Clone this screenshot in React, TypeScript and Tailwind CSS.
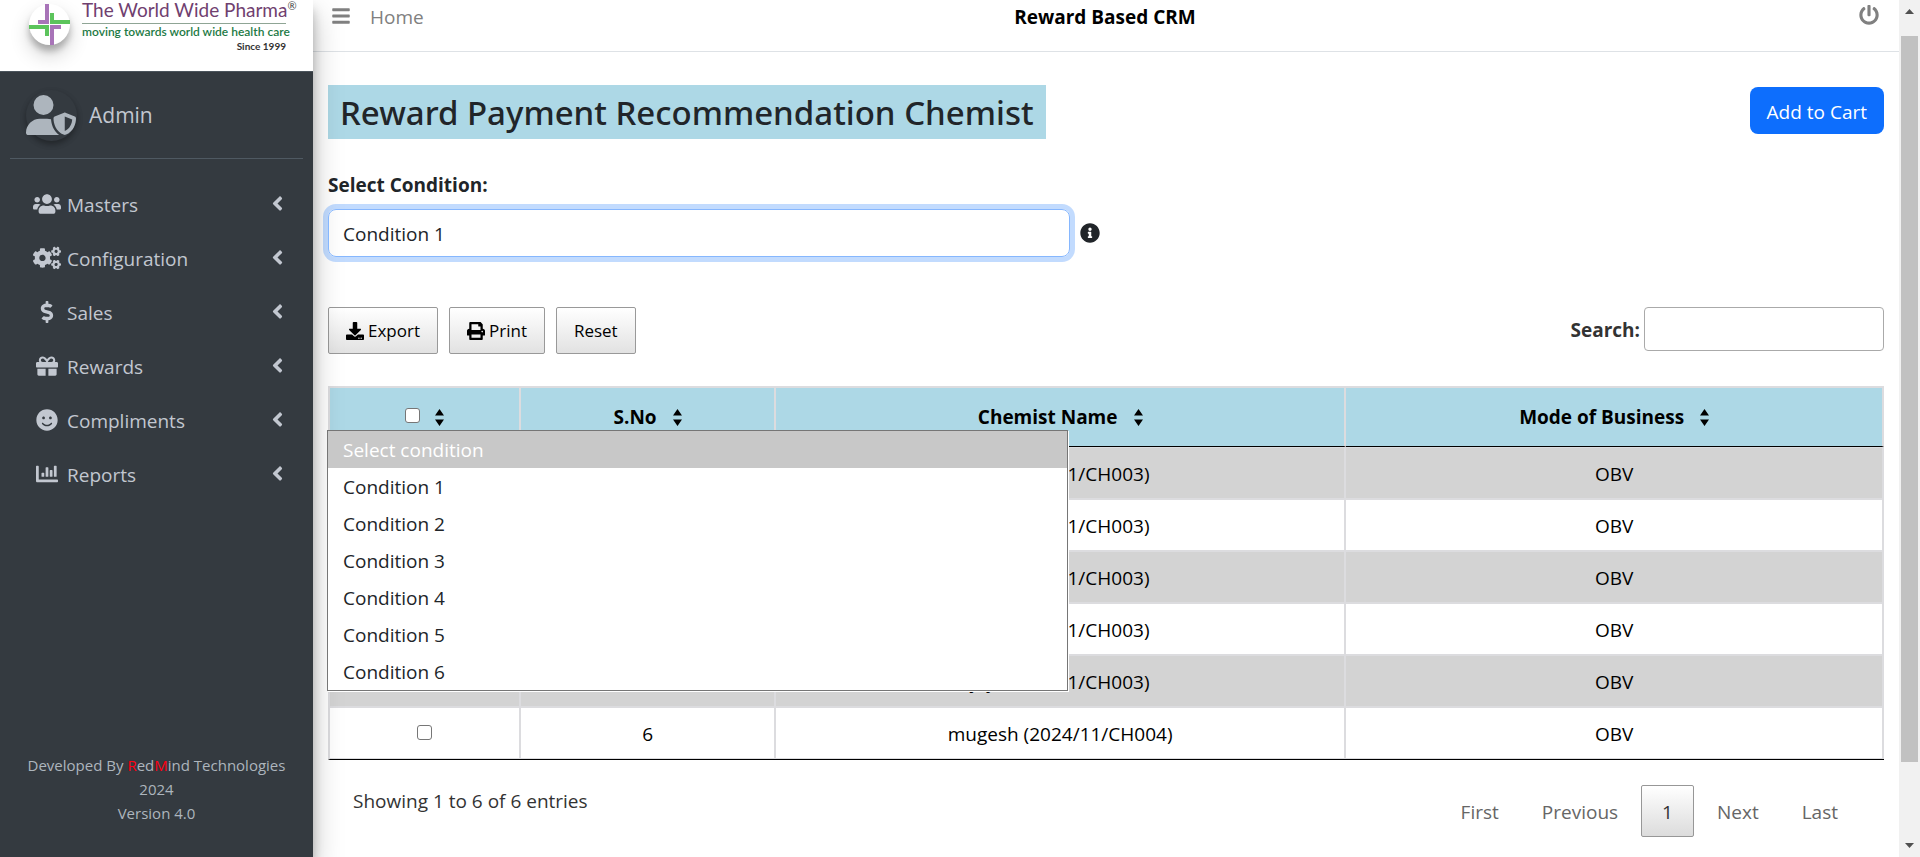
import { useState } from "react";
import { FaUsers, FaCogs, FaDollarSign, FaGift, FaSmile, FaChartBar, FaAngleLeft, FaBars, FaPowerOff, FaInfoCircle, FaDownload, FaPrint } from "react-icons/fa";
import { FaUserShield } from "react-icons/fa6";
import type { IconType } from "react-icons";

const menu: { label: string; icon: IconType; size: number }[] = [
  { label: "Masters", icon: FaUsers, size: 28 },
  { label: "Configuration", icon: FaCogs, size: 28 },
  { label: "Sales", icon: FaDollarSign, size: 22 },
  { label: "Rewards", icon: FaGift, size: 22 },
  { label: "Compliments", icon: FaSmile, size: 22 },
  { label: "Reports", icon: FaChartBar, size: 22 },
];

const conditions = ["Condition 1", "Condition 2", "Condition 3", "Condition 4", "Condition 5", "Condition 6"];

const rows = [
  { id: 1, name: "jay (2024/11/CH003)", mode: "OBV" },
  { id: 2, name: "jay (2024/11/CH003)", mode: "OBV" },
  { id: 3, name: "jay (2024/11/CH003)", mode: "OBV" },
  { id: 4, name: "jay (2024/11/CH003)", mode: "OBV" },
  { id: 5, name: "jay (2024/11/CH003)", mode: "OBV" },
  { id: 6, name: "mugesh (2024/11/CH004)", mode: "OBV" },
];

function LogoMark() {
  return (
    <svg viewBox="0 0 41 41" className="size-[41px]" aria-hidden="true">
      <path fill="#a874b8" d="M16 0h4v20H9v-4h7zM21 21h11v4h-7v16h-4z" />
      <path fill="#5cc45c" d="M21 9h4v7h16v4H21zM0 21h20v11h-4v-7H0z" />
    </svg>
  );
}

function SortIcon() {
  return (
    <svg viewBox="0 0 9 17" className="h-[17px] w-[9px]" aria-hidden="true">
      <path d="M4.500 0L9 6.500H0zM0 10.500H9L4.500 17z" />
    </svg>
  );
}

function Sidebar() {
  return (
    <aside className="relative z-10 flex w-[313px] shrink-0 flex-col bg-[#343a40] text-[#c2c7d0] shadow-[0_14px_28px_rgba(0,0,0,0.25),0_10px_10px_rgba(0,0,0,0.22)]">
      <a href="#home" className="flex h-[72px] items-start gap-3 border-b border-[#4b545c] bg-white pl-[29px]">
        <span className="mt-1 rounded-full bg-white shadow-[0_10px_20px_rgba(0,0,0,0.19),0_6px_6px_rgba(0,0,0,0.23)]">
          <LogoMark />
        </span>
        <span className="flex w-[204px] flex-col font-['Lato',sans-serif]">
          <span className="flex whitespace-nowrap text-[19px] leading-5 text-[#70406f]">
            The World Wide Pharma
            <span className="text-[11px] leading-3 text-[#444]">®</span>
          </span>
          <span className="mt-[3px] border-t border-[#8fa595]" />
          <span className="whitespace-nowrap text-[12px] font-semibold leading-4 text-[#1d7a45]">moving towards world wide health care</span>
          <span className="text-right text-[10px] font-bold leading-3 text-[#333]">Since 1999</span>
        </span>
      </a>
      <div className="mx-[10px] flex h-[87px] items-center gap-3 border-b border-[#4f5962] pl-4">
        <span className="flex size-[51px] items-center rounded-full shadow-[0_3px_6px_rgba(0,0,0,0.16),0_3px_6px_rgba(0,0,0,0.23)]">
          <FaUserShield size={50} color="#adb5bd" />
        </span>
        <a href="#admin" className="text-[21px] leading-[30px]">Admin</a>
      </div>
      <nav className="mt-[18px] flex flex-col">
        {menu.map(({ label, icon: Icon, size }) => (
          <a key={label} href={"#" + label.toLowerCase()} className="flex h-[54px] items-center pl-8 pr-6">
            <span className="flex w-[30px] justify-center">
              <Icon size={size} />
            </span>
            <span className="ml-[5px] flex-1 pt-0.5">{label}</span>
            <FaAngleLeft size={23} className="mb-0.5" />
          </a>
        ))}
      </nav>
      <footer className="mt-auto pb-8 text-center text-[15px] leading-6 text-[#adb5bd]">
        <p>
          Developed By <span className="text-[#ff0014]">R</span>ed<span className="text-[#ff0014]">M</span>ind Technologies
        </p>
        <p>2024</p>
        <p>Version 4.0</p>
      </footer>
    </aside>
  );
}

const checkbox = "size-[15px] appearance-none rounded-[3px] border border-[#767676] bg-white align-middle checked:bg-[#0d6efd]";
const toolButton = "flex h-[47px] items-center gap-1 rounded-[2px] border border-[#999] bg-linear-to-b from-white to-[#e2e2e2] px-[17px] text-[17px] leading-6 text-black";
const pageLink = "h-[52px] px-5 pt-0.5";

function ConditionPicker() {
  const [value, setValue] = useState("Condition 1");
  return (
    <div className="mt-[31px] w-1/2">
      <label htmlFor="condition" className="block font-bold leading-[30px]">Select Condition:</label>
      <div className="relative z-20 mt-[9px] flex items-center gap-[10px] pr-[6px]">
        <select
          id="condition"
          value={value}
          onChange={(e) => setValue(e.target.value)}
          className="h-12 min-w-0 flex-1 appearance-none rounded-lg border border-[#86b7fe] bg-transparent px-[14px] pt-0.5 text-[#212529] shadow-[0_0_0_5px_rgba(13,110,253,0.25)] outline-none"
        >
          {conditions.map((c) => (
            <option key={c}>{c}</option>
          ))}
        </select>
        <FaInfoCircle size={20} />
        <ul className="absolute -left-px right-[38px] top-[221px] border border-[#767676] bg-white leading-[35px] shadow-[1px_1px_0_#fff]">
          <li className="bg-[#c8c8c8] px-[15px] pt-0.5 text-white">Select condition</li>
          {conditions.map((c) => (
            <li key={c} className="px-[15px] pt-0.5" onClick={() => setValue(c)}>{c}</li>
          ))}
        </ul>
      </div>
    </div>
  );
}

function ChemistTable() {
  const th = "h-[61px] border-b border-r-2 border-t-2 border-b-black border-r-[#dcdcdf] border-t-[#dcdcdf] p-0 font-bold";
  return (
    <table className="mt-8 w-full table-fixed border-separate border-spacing-0 border-b border-l-2 border-b-black border-l-[#dcdcdf] text-center text-black">
      <colgroup>
        <col className="w-[12.3%]" />
        <col className="w-[16.4%]" />
        <col className="w-[36.7%]" />
        <col />
      </colgroup>
      <thead className="bg-[#add8e6]">
        <tr>
          <th className={th}>
            <div className="flex items-center justify-center gap-[15px]">
              <input type="checkbox" aria-label="Select all chemists" className={checkbox + " mb-1"} />
              <SortIcon />
            </div>
          </th>
          {["S.No", "Chemist Name", "Mode of Business"].map((h) => (
            <th key={h} className={th}>
              <div className="flex items-center justify-center gap-4">
                {h}
                <SortIcon />
              </div>
            </th>
          ))}
        </tr>
      </thead>
      <tbody className="[&_td]:h-[52px] [&_td]:border-b-2 [&_td]:border-r-2 [&_td]:border-[#dcdcdf] [&_td]:p-0 [&_td]:pt-0.5 [&_tr:first-child_td]:h-[53px] [&_tr:first-child_td]:border-t [&_tr:last-child_td]:h-[51px] [&_tr:last-child_td]:border-b [&_tr:nth-child(odd)]:bg-[#d3d3d3]">
        {rows.map((r) => (
          <tr key={r.id}>
            <td>
              <input type="checkbox" aria-label={"Select row " + r.id} className={checkbox + " mb-1.5"} />
            </td>
            <td>{r.id}</td>
            <td>{r.name}</td>
            <td>{r.mode}</td>
          </tr>
        ))}
      </tbody>
    </table>
  );
}

function Scrollbar() {
  return (
    <div className="flex w-[21px] shrink-0 flex-col items-center bg-[#f1f1f1]" aria-hidden="true">
      <svg viewBox="0 0 21 36" className="h-9 w-[21px]"><path fill="#505050" d="M10.500 9L15 14H6z" /></svg>
      <div className="w-[17px] grow-[726] bg-[#c1c1c1]" />
      <div className="grow-[71]" />
      <svg viewBox="0 0 21 24" className="h-6 w-[21px]"><path fill="#505050" d="M6 10h9l-4.500 5z" /></svg>
    </div>
  );
}

export default function App() {
  return (
    <div className="flex min-h-screen bg-white font-['Open_Sans','Noto_Sans',sans-serif] text-[19px] leading-[30px] text-[#212529]">
      <Sidebar />
      <div className="min-w-0 flex-1">
        <header className="grid h-[52px] grid-cols-[1fr_auto_1fr] items-start border-b border-[#dee2e6] pl-[18px] pr-5 text-[#808080]">
          <div className="flex items-start gap-[19px] pt-0.5">
            <button type="button" aria-label="Toggle sidebar" className="pt-1"><FaBars size={20} /></button>
            <a href="#home">Home</a>
          </div>
          <h2 className="pt-0.5 font-bold text-black">Reward Based CRM</h2>
          <button type="button" aria-label="Log out" className="justify-self-end pt-[5px]"><FaPowerOff size={20} /></button>
        </header>
        <main className="px-[15px] pb-5">
          <div className="flex items-start justify-between pt-[33px]">
            <h1 className="bg-[#add8e6] px-3 pt-0.5 font-['Noto_Sans','Open_Sans',sans-serif] text-[33px] font-medium leading-[52px]">Reward Payment Recommendation Chemist</h1>
            <button type="button" className="mt-[2px] h-[47px] rounded-lg bg-[#0d6efd] px-[17px] pt-0.5 text-white">Add to Cart</button>
          </div>
          <ConditionPicker />
          <div className="mt-[50px] flex items-start justify-between">
            <div className="flex gap-[11px]">
              <button type="button" className={toolButton}><FaDownload size={18} />Export</button>
              <button type="button" className={toolButton}><FaPrint size={18} />Print</button>
              <button type="button" className={toolButton}>Reset</button>
            </div>
            <div className="flex items-center gap-1">
              <label htmlFor="search" className="pt-0.5 font-bold text-[#333]">Search:</label>
              <input id="search" type="search" className="h-11 w-60 rounded-[4px] border border-[#aaa] bg-transparent px-2" />
            </div>
          </div>
          <ChemistTable />
          <div className="flex items-start justify-between pl-[25px] pr-[26px] pt-[25px]">
            <p className="pt-px text-[#333]">Showing 1 to 6 of 6 entries</p>
            <div className="flex gap-[3px] text-[#666]">
              <button type="button" className={pageLink}>First</button>
              <button type="button" className={pageLink}>Previous</button>
              <button type="button" className={pageLink + " rounded-[2px] border border-[#979797] bg-linear-to-b from-white to-[#dcdcdc] text-[#333]"}>1</button>
              <button type="button" className={pageLink}>Next</button>
              <button type="button" className={pageLink}>Last</button>
            </div>
          </div>
        </main>
      </div>
      <Scrollbar />
    </div>
  );
}
